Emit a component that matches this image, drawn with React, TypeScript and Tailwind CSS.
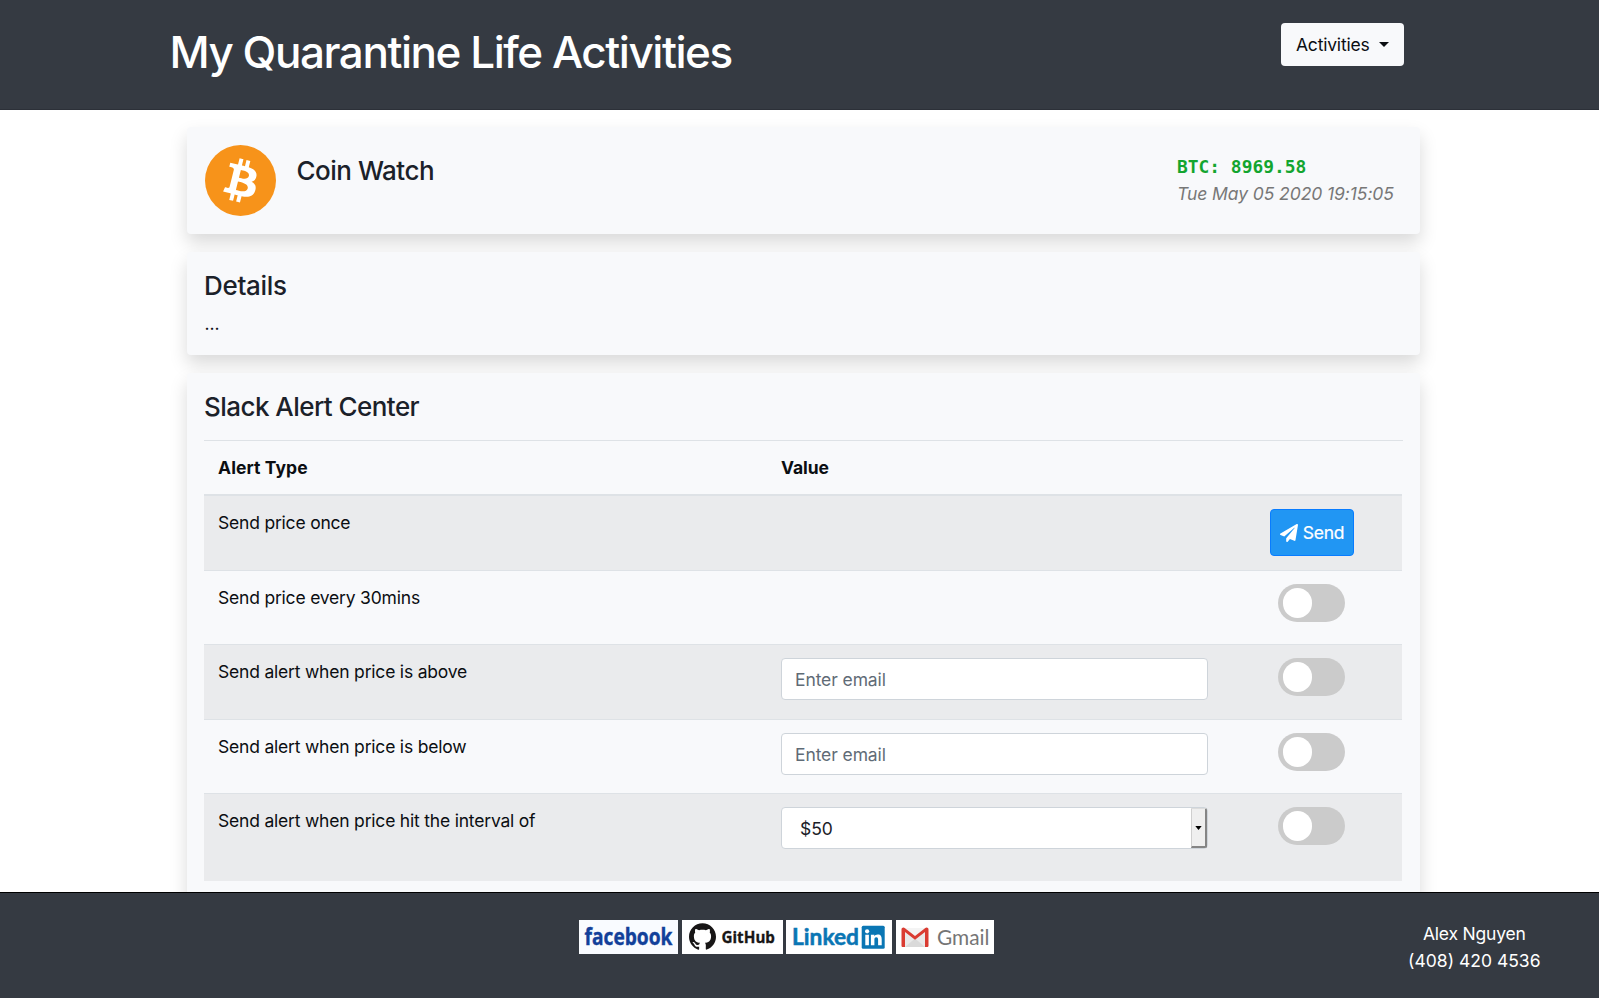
import type { ReactNode } from "react";
import { FaPaperPlane } from "react-icons/fa";

function BitcoinLogo() {
  return (
    <svg viewBox="0 0 32 32" className="mt-[0.5px] ml-[0.5px] size-[71px]">
      <circle cx="16" cy="16" r="16" fill="#f7931a" />
      <path
        fill="#fff"
        d="M23.189 14.02c.314-2.096-1.283-3.223-3.465-3.975l.708-2.84-1.728-.43-.69 2.765c-.454-.114-.92-.22-1.385-.326l.695-2.783L15.596 6l-.708 2.839c-.376-.086-.746-.17-1.104-.26l.002-.009-2.384-.595-.46 1.846s1.283.294 1.256.312c.7.175.826.638.805 1.006l-.806 3.235c.048.012.11.03.18.057l-.183-.045-1.13 4.532c-.086.212-.303.531-.793.41.018.025-1.256-.313-1.256-.313l-.858 1.978 2.25.561c.418.105.828.215 1.231.318l-.715 2.872 1.727.43.708-2.84c.472.127.93.245 1.378.357l-.706 2.828 1.728.43.715-2.866c2.948.558 5.164.333 6.097-2.333.752-2.146-.037-3.385-1.588-4.192 1.13-.26 1.98-1.003 2.207-2.538zm-3.95 5.538c-.533 2.147-4.148.986-5.32.695l.95-3.805c1.172.293 4.929.872 4.37 3.11zm.535-5.569c-.487 1.953-3.495.96-4.47.717l.86-3.45c.975.243 4.118.696 3.61 2.733z"
      />
    </svg>
  );
}

function FacebookBadge() {
  return (
    <svg viewBox="0 0 99 34" className="h-[34px] w-[99px] overflow-visible bg-[#f9fbff]">
      <text x="5.5" y="25" className="font-['Open_Sans',sans-serif] font-bold" fontSize="22.5" fill="#12409a" stroke="#12409a" strokeWidth=".4" textLength="88" lengthAdjust="spacingAndGlyphs">
        facebook
      </text>
    </svg>
  );
}

function GitHubBadge() {
  return (
    <svg viewBox="0 0 101 34" className="h-[34px] w-[101px] bg-white">
      <g transform="translate(7 3) scale(1.125)" fill="#181616">
        <path d="M12 .297c-6.63 0-12 5.373-12 12 0 5.303 3.438 9.8 8.205 11.385.6.113.82-.258.82-.577 0-.285-.01-1.04-.015-2.04-3.338.724-4.042-1.61-4.042-1.61C4.422 18.07 3.633 17.7 3.633 17.7c-1.087-.744.084-.729.084-.729 1.205.084 1.838 1.236 1.838 1.236 1.07 1.835 2.809 1.305 3.495.998.108-.776.417-1.305.76-1.605-2.665-.3-5.466-1.332-5.466-5.93 0-1.31.465-2.38 1.235-3.22-.135-.303-.54-1.523.105-3.176 0 0 1.005-.322 3.3 1.23.96-.267 1.98-.399 3-.405 1.02.006 2.04.138 3 .405 2.28-1.552 3.285-1.23 3.285-1.23.645 1.653.24 2.873.12 3.176.765.84 1.23 1.91 1.23 3.22 0 4.61-2.805 5.625-5.475 5.92.42.36.81 1.096.81 2.22 0 1.606-.015 2.896-.015 3.286 0 .315.21.69.825.57C20.565 22.092 24 17.592 24 12.297c0-6.627-5.373-12-12-12" />
      </g>
      <text x="39.5" y="22.5" className="font-['Noto_Sans',sans-serif] font-bold" fontSize="16.5" fill="#181616" stroke="#181616" strokeWidth=".3" textLength="53.5" lengthAdjust="spacingAndGlyphs">
        GitHub
      </text>
    </svg>
  );
}

function LinkedInBadge() {
  return (
    <svg viewBox="0 0 106 34" className="h-[34px] w-[106px] bg-white">
      <text x="6" y="25" className="font-['Lato',sans-serif] font-bold" fontSize="22" fill="#0a76b4" stroke="#0a76b4" strokeWidth=".5" textLength="67" lengthAdjust="spacingAndGlyphs">
        Linked
      </text>
      <rect x="75.7" y="5.8" width="23" height="23" rx="1.5" fill="#0a76b4" />
      <g fill="#fff">
        <circle cx="81.1" cy="11.3" r="2.1" />
        <path d="M79.3 14.7h3.6v10.6h-3.6zM84.9 14.7h3.4v1.5c.6-1.1 1.8-1.8 3.4-1.8 3.3 0 4 2.1 4 5v5.9h-3.6v-5.2c0-1.4-.1-2.8-1.8-2.8s-1.9 1.3-1.9 2.7v5.3h-3.5z" />
      </g>
    </svg>
  );
}

function GmailBadge() {
  return (
    <svg viewBox="0 0 98 34" className="h-[34px] w-[98px] bg-white">
      <path d="M6 8.5h26v18.5H6z" fill="#e9e9e9" />
      <path d="M9 27 19 18.5 29 27z" fill="#d9d9d9" />
      <path d="M9 10.5 19 19 29 10.5V8.5H9z" fill="#f4f4f4" />
      <path d="M5.5 9.5c0-1.2.9-1.9 1.9-1.9.6 0 1.1.2 1.6.6L19 16l10-7.8c.5-.4 1-.6 1.6-.6 1 0 1.9.7 1.9 1.9v16.2c0 .8-.6 1.4-1.4 1.4H29V12.1L19 19.8 9 12.1v15H6.9c-.8 0-1.4-.6-1.4-1.4z" fill="#da3c32" />
      <text x="41" y="25" className="font-['Lato',sans-serif]" fontSize="21.5" fill="#757575" textLength="52.5" lengthAdjust="spacingAndGlyphs">
        Gmail
      </text>
    </svg>
  );
}

function Card({ className, children }: { className: string; children: ReactNode }) {
  return (
    <section className={`w-full shrink-0 rounded-[4px] bg-[#f8f9fb] px-[17px] shadow-[0_9px_18px_rgba(0,0,0,0.15)] ${className}`}>
      {children}
    </section>
  );
}

function Toggle() {
  return (
    <button type="button" role="switch" aria-checked="false" className="ml-[57px] flex h-[38px] w-[67px] items-center rounded-full bg-[#cbcbcb] pl-[4.5px]">
      <span className="size-[29.5px] rounded-full bg-white" />
    </button>
  );
}

function EmailInput() {
  return (
    <input
      type="text"
      placeholder="Enter email"
      className="block h-[42px] w-[427px] rounded-[4px] border border-[#ced4da] bg-white px-[13px] text-[17.5px] tracking-[-0.1px] placeholder:text-[#5f6b76]"
    />
  );
}

function IntervalSelect() {
  return (
    <div className="flex h-[42px] w-[427px] items-center justify-between rounded-[4px] border border-[#ced4da] bg-white pl-[18px] text-[#1b2129]">
      <span className="tracking-[-0.1px]">$50</span>
      <span className="flex h-10 w-4 items-center justify-center rounded-r-[2px] border-t border-r-2 border-b-2 border-l border-t-[#dcdcdc] border-r-[#858585] border-b-[#858585] border-l-[#cfcfcf] bg-[#efefef]">
        <svg viewBox="0 0 8 5" className="h-[4px] w-[7px]">
          <path d="M0 0h8L4 5z" fill="#000" />
        </svg>
      </span>
    </div>
  );
}

function SendButton() {
  return (
    <button type="button" className="ml-[49px] flex h-[47px] w-[84px] items-center justify-center gap-[5px] rounded-[4px] border border-[#087cff] bg-[#2196f3] text-white">
      <FaPaperPlane className="size-[18px]" />
      <span className="tracking-[-0.2px] [-webkit-text-stroke:0.2px_white]">Send</span>
    </button>
  );
}

const rows: { label: string; className: string; value: ReactNode; action: ReactNode }[] = [
  { label: "Send price once", className: "h-[76px] border-t-2 bg-[#eaebed]", value: null, action: <SendButton /> },
  { label: "Send price every 30mins", className: "h-[74px] border-t", value: null, action: <Toggle /> },
  { label: "Send alert when price is above", className: "h-[75px] border-t bg-[#eaebed]", value: <EmailInput />, action: <Toggle /> },
  { label: "Send alert when price is below", className: "h-[74px] border-t", value: <EmailInput />, action: <Toggle /> },
  { label: "Send alert when price hit the interval of", className: "h-[88px] border-t bg-[#eaebed]", value: <IntervalSelect />, action: <Toggle /> },
];

export default function App() {
  return (
    <div className="flex h-screen flex-col overflow-hidden bg-white font-['Inter','Liberation_Sans',sans-serif] text-[17.5px] leading-[27px] text-[#0b0e12]">
      <header className="flex h-[110px] shrink-0 items-start justify-between border-b border-[#2c3038] bg-[#353a42] pr-[195px] pl-[169.5px]">
        <h1 className="pt-[25px] text-[44px] leading-[54px] font-medium tracking-[-1.46px] text-white">My Quarantine Life Activities</h1>
        <button type="button" className="mt-[23px] flex h-[43px] w-[123px] items-center rounded-[4px] bg-[#f8f9fb] pl-[15px] text-[#0b0e12]">
          <span className="tracking-[-0.2px]">Activities</span>
          <svg viewBox="0 0 10 5" className="ml-[9px] h-[5px] w-[10px]">
            <path d="M0 0h10L5 5z" fill="#0b0e12" />
          </svg>
        </button>
      </header>

      <main className="flex min-h-0 flex-1 flex-col items-start gap-[18px] overflow-hidden pt-[17px] pr-[179px] pl-[187px]">
        <Card className="flex h-[106.5px] items-start pt-[17px]">
          <BitcoinLogo />
          <h2 className="mt-[11px] ml-[21px] text-[26px] leading-[32px] font-[450] tracking-[-0.5px] text-[#1b2129]">Coin Watch</h2>
          <div className="mt-[9px] mr-[8px] ml-auto w-[218px]">
            <div className="font-['DejaVu_Sans_Mono',monospace] text-[17.9px] leading-[27px] font-bold text-[#13a52f]">BTC: 8969.58</div>
            <div className="whitespace-nowrap text-[#777] italic tracking-[-0.08px]">Tue May 05 2020 19:15:05</div>
          </div>
        </Card>

        <Card className="h-[103.5px] pt-[18.5px]">
          <h2 className="text-[26px] leading-[32px] font-[450] tracking-[-0.3px] text-[#1b2129]">Details</h2>
          <p className="mt-[8px] pl-[0.5px]">...</p>
        </Card>

        <Card className="h-[640px] pt-[18px]">
          <h2 className="text-[26px] leading-[32px] font-[450] tracking-[-0.55px] text-[#1b2129]">Slack Alert Center</h2>
          <div className="mt-[17px] grid h-[54px] grid-cols-[563px_454px_181px] items-center border-t border-[#dee2e6] font-bold">
            <div className="pl-[14px] tracking-[0.08px]">Alert Type</div>
            <div className="pl-[14px] tracking-[-0.1px]">Value</div>
            <div />
          </div>
          {rows.map((row) => (
            <div key={row.label} className={`grid w-[1198px] grid-cols-[563px_454px_181px] items-start border-[#dee2e6] pt-[13px] ${row.className}`}>
              <div className="pl-[14px] tracking-[-0.2px]">{row.label}</div>
              <div className="pl-[14px]">{row.value}</div>
              <div>{row.action}</div>
            </div>
          ))}
        </Card>
      </main>

      <footer className="flex h-[106px] shrink-0 items-start border-t border-black bg-[#353a42] text-white">
        <div className="ml-[579px] flex pt-[27px]">
          <FacebookBadge />
          <div className="ml-[4px]"><GitHubBadge /></div>
          <div className="ml-[3px]"><LinkedInBadge /></div>
          <div className="ml-[4px]"><GmailBadge /></div>
        </div>
        <address className="mr-[58.5px] ml-auto pt-[27px] text-center not-italic">
          <div className="tracking-[-0.2px]">Alex Nguyen</div>
          <div>(408) 420 4536</div>
        </address>
      </footer>
    </div>
  );
}
